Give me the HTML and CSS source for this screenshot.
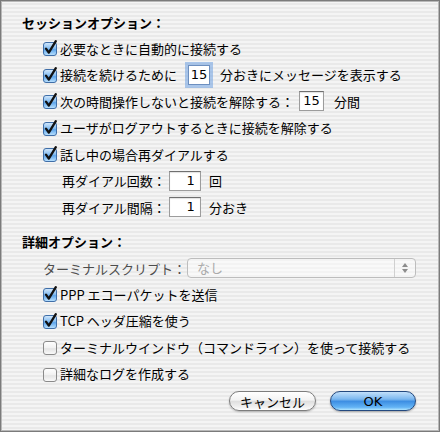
FILE: index.html
```html
<!DOCTYPE html>
<html lang="ja">
<head>
  <meta charset="UTF-8">
  <title>セッションオプション</title>
  <link rel="stylesheet" href="styles.css">
</head>
<body>
  <svg width="0" height="0" class="defs">
    <defs>
      <linearGradient id="cb-on" x1="0" y1="0" x2="0" y2="1">
        <stop offset="0" stop-color="#d6eafd"/>
        <stop offset="0.45" stop-color="#86bdf0"/>
        <stop offset="0.55" stop-color="#5ea6ec"/>
        <stop offset="1" stop-color="#bfe4ff"/>
      </linearGradient>
      <linearGradient id="cb-off" x1="0" y1="0" x2="0" y2="1">
        <stop offset="0" stop-color="#ffffff"/>
        <stop offset="0.5" stop-color="#f1f1f1"/>
        <stop offset="0.55" stop-color="#e4e4e4"/>
        <stop offset="1" stop-color="#fbfbfb"/>
      </linearGradient>
      <symbol id="check-on" viewBox="0 0 16 16">
        <rect x="1.5" y="2.5" width="13" height="13" rx="2.5" fill="url(#cb-on)" stroke="#3f6ea8"/>
        <path d="M4 8.6 L6.8 12.6 L13.8 1.2" fill="none" stroke="#111" stroke-width="2.3" stroke-linecap="round" stroke-linejoin="round"/>
      </symbol>
      <symbol id="check-off" viewBox="0 0 16 16">
        <rect x="1.5" y="2.5" width="13" height="13" rx="2.5" fill="url(#cb-off)" stroke="#8a8a8a"/>
      </symbol>
    </defs>
  </svg>

  <div class="window">
    <!-- セッションオプション -->
    <div class="title">セッションオプション：</div>
    <div class="rows">
      <label class="row"><svg class="cb"><use href="#check-on"/></svg>必要なときに自動的に接続する</label>
      <label class="row"><svg class="cb"><use href="#check-on"/></svg>接続を続けるために<span class="field focus">15</span>分おきにメッセージを表示する</label>
      <label class="row"><svg class="cb"><use href="#check-on"/></svg>次の時間操作しないと接続を解除する：<span class="field mid">15</span>分間</label>
      <label class="row"><svg class="cb"><use href="#check-on"/></svg>ユーザがログアウトするときに接続を解除する</label>
      <label class="row"><svg class="cb"><use href="#check-on"/></svg>話し中の場合再ダイアルする</label>
      <div class="row sub">再ダイアル回数：<span class="field num">1</span>回</div>
      <div class="row sub">再ダイアル間隔：<span class="field num">1</span>分おき</div>
    </div>

    <!-- 詳細オプション -->
    <div class="title second">詳細オプション：</div>
    <div class="rows">
      <div class="row script">ターミナルスクリプト：
        <div class="popup">
          <span>なし</span>
          <span class="stepper">
            <svg width="8" height="12" viewBox="0 0 8 12">
              <path d="M4 1 L7 5 H1 Z" fill="#8c8c8c"/>
              <path d="M4 11 L7 7 H1 Z" fill="#8c8c8c"/>
            </svg>
          </span>
        </div>
      </div>
      <label class="row"><svg class="cb"><use href="#check-on"/></svg>PPP エコーパケットを送信</label>
      <label class="row"><svg class="cb"><use href="#check-on"/></svg>TCP ヘッダ圧縮を使う</label>
      <label class="row"><svg class="cb"><use href="#check-off"/></svg>ターミナルウインドウ（コマンドライン）を使って接続する</label>
      <label class="row"><svg class="cb"><use href="#check-off"/></svg>詳細なログを作成する</label>
    </div>

    <div class="buttons">
      <button class="btn cancel">キャンセル</button>
      <button class="btn ok">OK</button>
    </div>
  </div>
</body>
</html>
```
FILE: styles.css
```css
body {
  margin: 0;
  font-family: "Noto Sans CJK JP", sans-serif;
  font-size: 13px;
  color: #000;
}
.defs {
  position: absolute;
}
.window {
  width: 440px;
  height: 432px;
  box-sizing: border-box;
  border: 1px solid #7b7b7b;
  box-shadow: inset 0 0 0 1px #b8b8b8;
  background: repeating-linear-gradient(#f4f4f4 0 2px, #e9e9e9 2px 4px);
  padding: 13px 0 0 21px;
}
.title {
  font-weight: bold;
  height: 18px;
  line-height: 18px;
}
.title.second {
  margin-top: 12.5px;
}
.rows {
  margin-top: 3px;
  padding-left: 20px;
}
.row {
  display: flex;
  align-items: center;
  height: 26.5px;
  white-space: nowrap;
}
.cb {
  width: 16px;
  height: 16px;
  margin-right: 2px;
  flex: none;
}
.row.sub {
  padding-left: 20px;
}
.field {
  box-sizing: border-box;
  height: 20px;
  line-height: 18px;
  background: #fff;
  border: 1px solid #9c9c9c;
  border-top-color: #6f6f6f;
  box-shadow: inset 0 1px 1px rgba(0, 0, 0, 0.12);
  font-family: "DejaVu Sans", sans-serif;
  font-size: 13px;
  text-align: center;
  margin: 0 8px 0 5px;
}
.field.focus {
  width: 22px;
  margin: 0 10px 0 11px;
  box-shadow: 0 0 0 3px rgba(110, 160, 225, 0.55);
  border-color: #6d8fbf;
}
.field.mid {
  width: 25px;
  margin: 0 10px 0 5px;
}
.field.num {
  width: 32px;
  text-align: right;
  padding-right: 5px;
  margin: 0 8px 0 3px;
}
.row.script {
  margin-top: 4px;
  height: 26px;
  padding-left: 1px;
  color: #4d4d4d;
}
.popup {
  box-sizing: border-box;
  width: 229px;
  height: 20px;
  margin-left: 1px;
  display: flex;
  justify-content: space-between;
  border: 1px solid #bdbdbd;
  border-radius: 4px;
  background: rgba(255, 255, 255, 0.45);
  color: #aaa;
  padding-left: 9px;
  line-height: 18px;
}
.stepper {
  width: 20px;
  border-left: 1px solid #d0d0d0;
  display: flex;
  align-items: center;
  justify-content: center;
}
.buttons {
  display: flex;
  justify-content: flex-end;
  gap: 14px;
  margin-top: 4px;
  padding-right: 23px;
}
.btn {
  box-sizing: border-box;
  height: 20px;
  border-radius: 10px;
  font-family: "Noto Sans CJK JP", sans-serif;
  font-size: 13px;
  line-height: 17px;
  padding: 0;
  color: #000;
}
.btn.cancel {
  width: 87px;
  border: 1px solid #7d7d7d;
  background: linear-gradient(#ffffff, #f3f3f3 45%, #dfdfdf 52%, #f2f2f2 85%, #ffffff);
  box-shadow: 0 1px 2px rgba(0, 0, 0, 0.25);
}
.btn.ok {
  width: 86px;
  border: 1px solid #24497f;
  background: linear-gradient(#c2e0fb, #7bb7ef 40%, #3d8ee3 52%, #64b4f5 85%, #b2e6ff);
  box-shadow: 0 1px 2px rgba(0, 0, 0, 0.3);
  font-family: "DejaVu Sans", sans-serif;
}
```
